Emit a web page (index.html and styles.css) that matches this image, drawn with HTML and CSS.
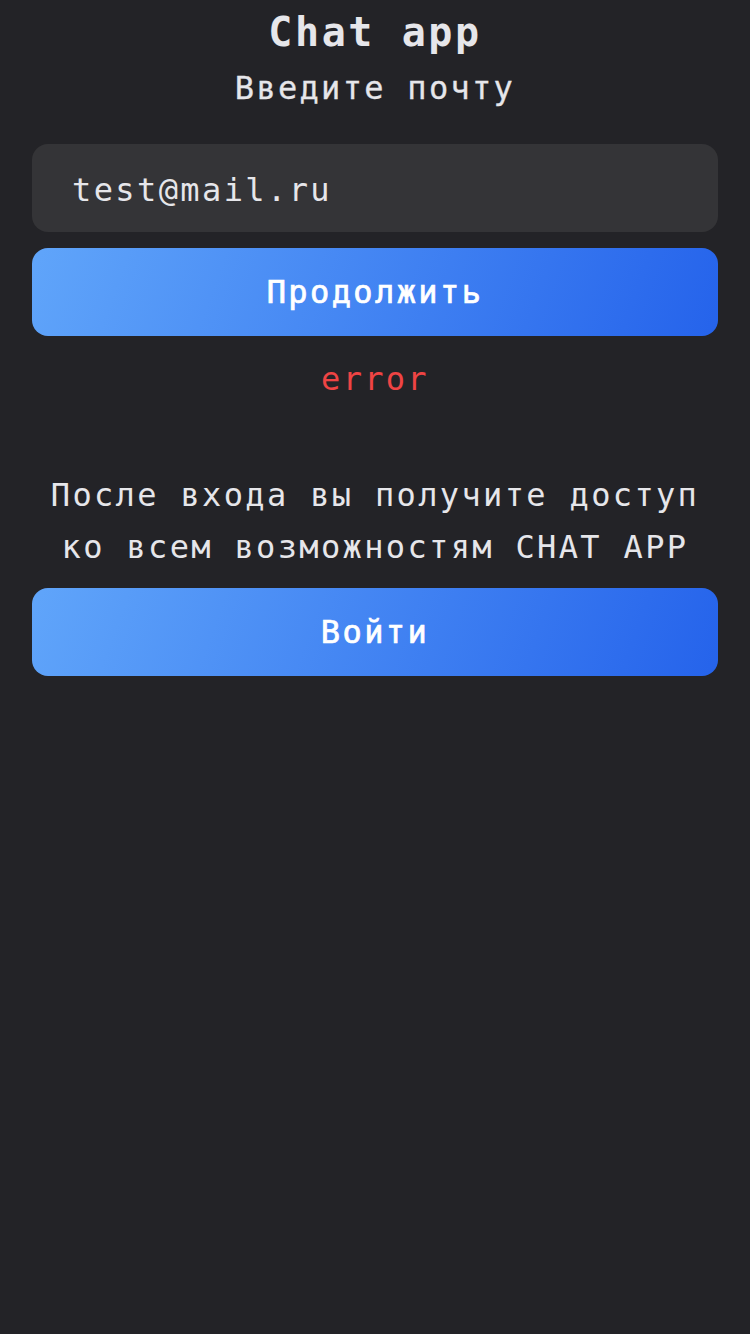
FILE: index.html
```html
<!DOCTYPE html>
<html lang="ru">
<head>
<meta charset="utf-8">
<title>Chat app</title>
<link rel="stylesheet" href="styles.css">
</head>
<body>
<main class="page">
  <h1 class="title">Chat app</h1>
  <h2 class="subtitle">Введите почту</h2>
  <form class="form">
    <input class="field" type="email" value="test@mail.ru">
    <button class="btn" type="button">Продолжить</button>
  </form>
  <p class="error">error</p>
  <p class="note">После входа вы получите доступ ко всем возможностям CHAT APP</p>
  <button class="btn" type="button">Войти</button>
</main>
</body>
</html>
```
FILE: styles.css
```css
html, body {
  margin: 0;
  padding: 0;
  background: #232327;
  min-height: 100%;
}
body {
  font-family: "DejaVu Sans Mono", "Liberation Mono", monospace;
  color: #e6e6ea;
}
.page {
  display: flex;
  flex-direction: column;
  padding: 0 32px;
  min-height: 1334px;
  box-sizing: border-box;
}
.title {
  margin: 0;
  text-align: center;
  font-size: 40px;
  font-weight: bold;
  letter-spacing: 2.6px;
  line-height: 64px;
}
.subtitle {
  margin: 0 0 32px;
  text-align: center;
  font-size: 32px;
  font-weight: normal;
  letter-spacing: 2.3px;
  line-height: 48px;
  -webkit-text-stroke: 0.3px #e6e6ea;
}
.form {
  display: flex;
  flex-direction: column;
  gap: 16px;
  margin: 0;
}
.field {
  display: block;
  box-sizing: border-box;
  width: 100%;
  height: 88px;
  border: none;
  outline: none;
  border-radius: 16px;
  background: #343437;
  color: #e6e6ea;
  padding: 4px 40px 0;
  font-family: inherit;
  font-size: 32px;
  letter-spacing: 2.4px;
}
.btn {
  display: block;
  box-sizing: border-box;
  width: 100%;
  height: 88px;
  border: none;
  border-radius: 16px;
  background: linear-gradient(110deg, #60a5fa 0%, #2563eb 100%);
  color: #ffffff;
  font-family: inherit;
  font-size: 32px;
  font-weight: normal;
  -webkit-text-stroke: 0.7px #ffffff;
  letter-spacing: 2.4px;
  cursor: pointer;
}
.error {
  margin: 16px 0 0;
  text-align: center;
  color: #ef4444;
  font-size: 32px;
  letter-spacing: 2.3px;
  line-height: 54px;
}
.note {
  margin: 63px 0 15px;
  text-align: center;
  font-size: 32px;
  letter-spacing: 2.35px;
  line-height: 52px;
}
```
